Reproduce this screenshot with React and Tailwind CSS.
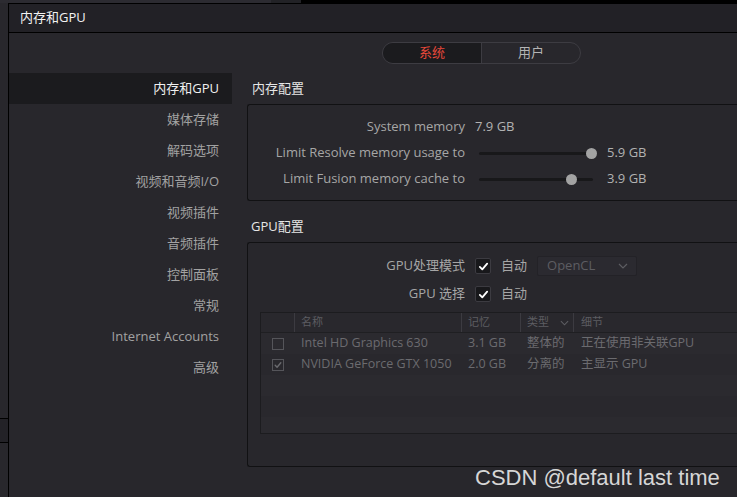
import React from 'react';

const font = { fontFamily: '"Open Sans", "Noto Sans CJK SC", sans-serif' };

const navItems = [
  '内存和GPU',
  '媒体存储',
  '解码选项',
  '视频和音频I/O',
  '视频插件',
  '音频插件',
  '控制面板',
  '常规',
  'Internet Accounts',
  '高级',
];

function Check({ className = '' }) {
  return (
    <svg viewBox="0 0 16 16" className={className} fill="none" stroke="currentColor" strokeWidth="2.2" strokeLinecap="round" strokeLinejoin="round">
      <path d="M3.5 8.5l3 3 6-7" />
    </svg>
  );
}

function Slider({ pos }) {
  return (
    <div className="relative w-[114px] h-[11px] flex items-center">
      <div className="w-full h-[3px] rounded-full bg-[#18181a]" />
      <div className="absolute top-0 w-[11px] h-[11px] rounded-full bg-[#a3a3a3]" style={{ left: pos }} />
    </div>
  );
}

function Checkbox() {
  return (
    <div className="w-[16px] h-[16px] rounded-[2px] bg-[#18181b] border border-[#3c3b41] flex items-center justify-center text-white">
      <Check className="w-[13px] h-[13px]" />
    </div>
  );
}

export default function App() {
  return (
    <div className="relative w-[737px] h-[497px] overflow-hidden bg-[#28272c] flex flex-col text-[13px]" style={font}>
      <div className="flex h-[3px] shrink-0">
        <div className="w-[271px] bg-[#2c2b31]" />
        <div className="w-[30px] bg-[#222226]" />
        <div className="flex-1 bg-black" />
      </div>
      <div className="flex flex-1 min-h-0">
        <div className="w-[8px] shrink-0 flex flex-col">
          <div className="h-[415px]" />
          <div className="h-[25px] bg-[#232227] border-y border-black" />
        </div>
        <div className="flex-1 flex flex-col border-l border-black border-t">
          <div className="h-[29px] shrink-0 bg-[#222126] border-b border-black flex items-center pl-[11px] text-[#f2f2f2]">
            内存和GPU
          </div>
          <div className="h-[40px] shrink-0 pt-[9px] pl-[373px]">
            <div className="flex w-[199px] h-[22px] rounded-full border border-[#3d3c42] overflow-hidden">
              <div className="w-[99px] bg-[#1b1b1e] border-r border-[#3d3c42] flex items-center justify-center text-[#e8483a]">系统</div>
              <div className="flex-1 flex items-center justify-center text-[#b4b4b4]">用户</div>
            </div>
          </div>
          <div className="flex flex-1 min-h-0">
            <div className="w-[223px] shrink-0 flex flex-col">
              {navItems.map((item, i) => (
                <div
                  key={item}
                  className={`h-[31px] flex items-center justify-end pr-[13px] ${i === 0 ? 'bg-[#1b1b1e] text-[#f0f0f0]' : 'text-[#a2a2a2]'}`}
                >
                  {item}
                </div>
              ))}
            </div>
            <div className="flex-1 pl-[15px] flex flex-col">
              <div className="h-[31px] flex items-center pl-[5px] text-[#e6e6e6]">内存配置</div>
              <div className="border border-r-0 border-[#111113] rounded-l-[3px] pt-[9px] pb-[8px] text-[#a6a6a6]">
                <div className="h-[26px] flex items-center">
                  <div className="w-[217px] text-right">System memory</div>
                  <div className="ml-[10px] text-[#b2b2b2]">7.9 GB</div>
                </div>
                <div className="h-[26px] flex items-center">
                  <div className="w-[217px] text-right">Limit Resolve memory usage to</div>
                  <div className="ml-[14px]"><Slider pos={107} /></div>
                  <div className="ml-[14px] text-[#b2b2b2]">5.9 GB</div>
                </div>
                <div className="h-[26px] flex items-center">
                  <div className="w-[217px] text-right">Limit Fusion memory cache to</div>
                  <div className="ml-[14px]"><Slider pos={87} /></div>
                  <div className="ml-[14px] text-[#b2b2b2]">3.9 GB</div>
                </div>
              </div>
              <div className="mt-[16px] h-[20px] mb-[5px] flex items-center pl-[4px] text-[#e6e6e6]">GPU配置</div>
              <div className="h-[225px] border border-r-0 border-[#111113] rounded-l-[3px] pt-[9px] text-[#a6a6a6]">
                <div className="h-[28px] flex items-center">
                  <div className="w-[217px] text-right">GPU处理模式</div>
                  <div className="ml-[10px]"><Checkbox /></div>
                  <div className="ml-[10px]">自动</div>
                  <div className="ml-[10px] w-[100px] h-[20px] rounded-[2px] bg-[#2b2a30] border border-[#232227] flex items-center justify-between pl-[9px] pr-[8px] text-[#5d5d62]">
                    <span>OpenCL</span>
                    <svg viewBox="0 0 10 6" className="w-[10px] h-[6px]" fill="none" stroke="currentColor" strokeWidth="1.2">
                      <path d="M1 1l4 4 4-4" />
                    </svg>
                  </div>
                </div>
                <div className="h-[28px] flex items-center">
                  <div className="w-[217px] text-right">GPU 选择</div>
                  <div className="ml-[10px]"><Checkbox /></div>
                  <div className="ml-[10px]">自动</div>
                </div>
                <div className="mt-[4px] ml-[12px] h-[122px] border border-r-0 border-[#1c1c1f] bg-[#29282d] flex flex-col text-[12.5px] text-[#6b6b6f]">
                  <div className="h-[20px] flex items-center text-[11px] text-[#5d5d62] border-b border-[#1f1f22]">
                    <div className="w-[33px] h-full" />
                    <div className="w-[167px] h-full border-l border-[#3c3b41] pl-[6px] flex items-center">名称</div>
                    <div className="w-[59px] h-full border-l border-[#3c3b41] pl-[6px] flex items-center">记忆</div>
                    <div className="w-[53px] h-full border-l border-[#3c3b41] pl-[6px] flex items-center justify-between pr-[4px]">
                      <span>类型</span>
                      <svg viewBox="0 0 10 6" className="w-[9px] h-[6px]" fill="none" stroke="currentColor" strokeWidth="1.2">
                        <path d="M1 1l4 4 4-4" />
                      </svg>
                    </div>
                    <div className="flex-1 h-full border-l border-[#3c3b41] pl-[7px] flex items-center">细节</div>
                  </div>
                  <div className="h-[21px] flex items-center bg-[#2b2a2f]">
                    <div className="w-[33px] flex justify-center pl-[1px]">
                      <div className="w-[12px] h-[12px] border border-[#55555a]" />
                    </div>
                    <div className="w-[167px] pl-[7px] whitespace-nowrap">Intel HD Graphics 630</div>
                    <div className="w-[59px] pl-[7px]">3.1 GB</div>
                    <div className="w-[53px] pl-[7px]">整体的</div>
                    <div className="flex-1 pl-[8px] whitespace-nowrap">正在使用非关联GPU</div>
                  </div>
                  <div className="h-[21px] flex items-center bg-[#29282d]">
                    <div className="w-[33px] flex justify-center pl-[1px]">
                      <div className="w-[12px] h-[12px] border border-[#55555a] flex items-center justify-center text-[#6b6b6f]">
                        <Check className="w-[10px] h-[10px]" />
                      </div>
                    </div>
                    <div className="w-[167px] pl-[7px] whitespace-nowrap">NVIDIA GeForce GTX 1050</div>
                    <div className="w-[59px] pl-[7px]">2.0 GB</div>
                    <div className="w-[53px] pl-[7px]">分离的</div>
                    <div className="flex-1 pl-[8px] whitespace-nowrap">主显示 GPU</div>
                  </div>
                  <div className="h-[21px] bg-[#2b2a2f]" />
                  <div className="h-[21px] bg-[#29282d]" />
                  <div className="flex-1 bg-[#2b2a2f]" />
                </div>
              </div>
            </div>
          </div>
        </div>
      </div>
      <div className="absolute left-[475px] top-[464px] text-[22px] leading-[28px] text-[#d6d6d6] whitespace-nowrap" style={{ fontFamily: '"Liberation Sans", Arial, sans-serif' }}>
        CSDN @default last time
      </div>
    </div>
  );
}
